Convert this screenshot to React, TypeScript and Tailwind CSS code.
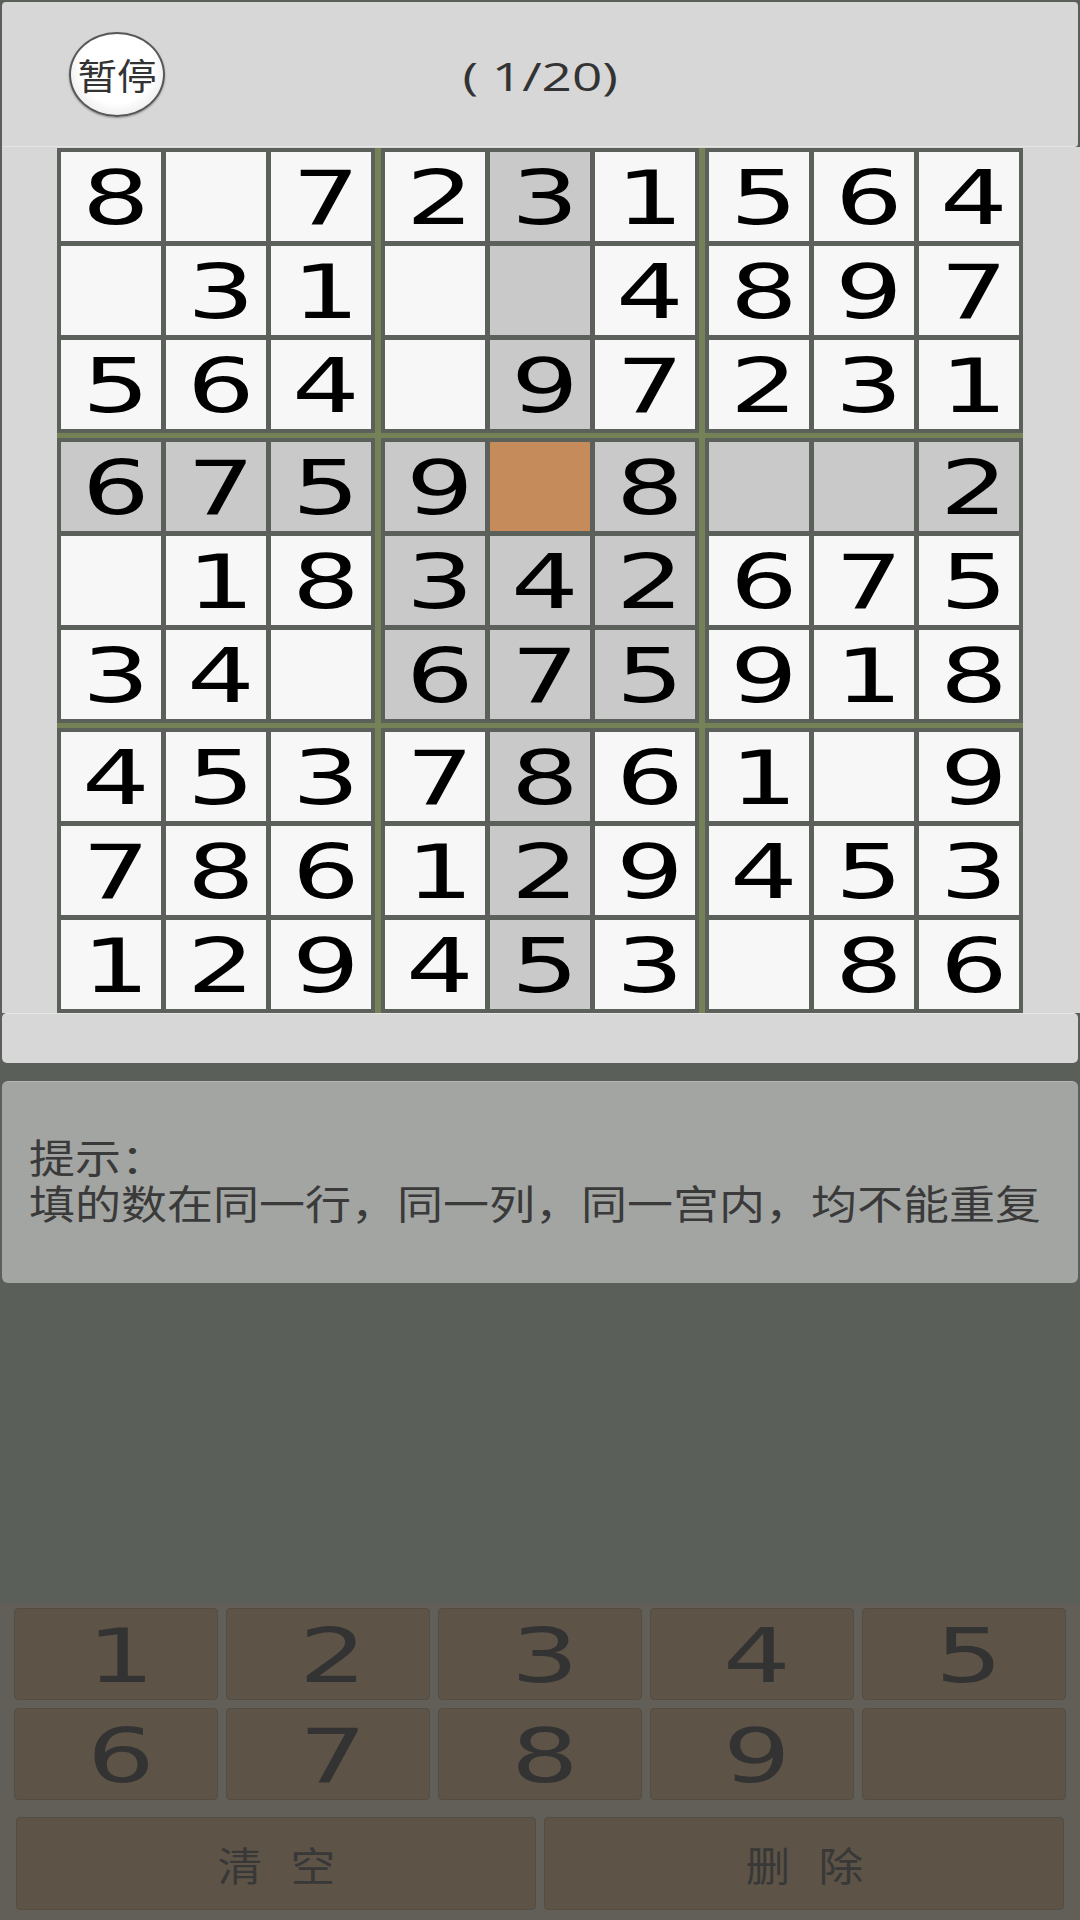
import React from "react";

const board = [
    "8_7231564",
    "_31__4897",
    "564_97231",
    "6759_8__2",
    "_18342675",
    "34_675918",
    "4537861_9",
    "786129453",
    "129453_86",
];

const selRow = 3;
const selCol = 4;

function cellColor(r: number, c: number) {
    if (r === selRow && c === selCol) return "bg-[#c68b5a]";
    const sameBox = Math.floor(r / 3) === Math.floor(selRow / 3) && Math.floor(c / 3) === Math.floor(selCol / 3);
    if (r === selRow || c === selCol || sameBox) return "bg-[#c9c9c9]";
    return "bg-[#f7f7f7]";
}

function Digit({ value, dark }: { value: string; dark?: boolean }) {
    return (
        <span
            className={`inline-block font-['DejaVu_Sans',sans-serif] text-[75px] leading-none scale-x-[1.42] translate-x-[5px] translate-y-[2px] ${dark ? "text-[#333333]" : "text-black"}`}
        >
            {value}
        </span>
    );
}

function Board() {
    const boxes = [];
    for (let br = 0; br < 3; br++) {
        for (let bc = 0; bc < 3; bc++) {
            const cells = [];
            for (let i = 0; i < 3; i++) {
                for (let j = 0; j < 3; j++) {
                    const r = br * 3 + i;
                    const c = bc * 3 + j;
                    const v = board[r][c];
                    cells.push(
                        <div key={`${r}-${c}`} className={`flex items-center justify-center overflow-hidden ${cellColor(r, c)}`}>
                            {v !== "_" && <Digit value={v} />}
                        </div>
                    );
                }
            }
            boxes.push(
                <div
                    key={`${br}-${bc}`}
                    className="bg-[#5b605b] p-[4px] grid grid-cols-[repeat(3,100px)] grid-rows-[repeat(3,89px)] gap-[5px]"
                >
                    {cells}
                </div>
            );
        }
    }
    return <div className="w-[966px] bg-[#758257] grid grid-cols-3 gap-x-[6px] gap-y-[5px]">{boxes}</div>;
}

const keys = ["1", "2", "3", "4", "5", "6", "7", "8", "9", ""];

export default function App() {
    return (
        <div className="w-[1080px] h-[1920px] bg-[#5a5f5a] flex flex-col overflow-hidden">
            {/* top bar */}
            <div className="mt-[2px] mx-[2px] h-[145px] bg-[#d7d7d7] rounded-t-[4px] rounded-br-[4px] border-b border-[#e4e4e4] grid grid-cols-[1fr_auto_1fr] items-center">
                <div className="pl-[67px]">
                    <div className="w-[96px] h-[85px] rounded-[50%] border-2 border-[#565656] bg-[radial-gradient(circle_at_50%_40%,#ffffff_55%,#dadada_100%)] shadow-[0_1px_2px_rgba(0,0,0,0.35)] flex items-center justify-center">
                        <span className="inline-block font-['Noto_Sans_CJK_SC',sans-serif] text-[36px] leading-none text-[#333333] scale-x-[1.1]">
                            暂停
                        </span>
                    </div>
                </div>
                <span className="inline-block font-['Open_Sans',sans-serif] text-[39px] leading-none text-[#333333] scale-x-[1.36] translate-y-[1px] whitespace-pre">
                    ( 1/20)
                </span>
                <div />
            </div>

            {/* board */}
            <div className="ml-[2px] h-[866px] bg-[#d7d7d7] pl-[55px] pt-[1px]">
                <Board />
            </div>

            <div className="mx-[2px] h-[50px] bg-[#d7d7d7] rounded-[5px] border-t border-[#e6e6e6]" />

            {/* hint */}
            <div className="mt-[18px] mx-[2px] h-[202px] bg-[#a3a5a2] rounded-[6px] border-t border-[#b2b4b1] flex flex-col justify-center pl-[27px]">
                <div className="origin-left scale-x-[1.15] font-['Liberation_Sans','Noto_Sans_CJK_SC',sans-serif] text-[40px] leading-[45.5px] text-[#3a3a3a] whitespace-nowrap">
                    <div>提示：</div>
                    <div>填的数在同一行，同一列，同一宫内，均不能重复</div>
                </div>
            </div>

            <div className="flex-1" />

            {/* keypad */}
            <div className="h-[317px] bg-[#625f59] pt-[5px] px-[14px]">
                <div className="grid grid-cols-5 gap-[8px]">
                    {keys.map((k, i) => (
                        <div
                            key={i}
                            className="h-[92px] rounded-[4px] bg-[#5d5447] border border-[#544d43] flex items-center justify-center overflow-hidden"
                        >
                            {k && <Digit value={k} dark />}
                        </div>
                    ))}
                </div>
                <div className="mt-[17px] px-[2px] grid grid-cols-2 gap-[8px]">
                    <div className="h-[93px] rounded-[4px] bg-[#5d5447] border border-[#544d43] flex items-center justify-center gap-[33px] font-['Noto_Sans_CJK_SC',sans-serif] text-[40px] leading-none text-[#383838]">
                        <span className="inline-block scale-x-[1.12]">清</span>
                        <span className="inline-block scale-x-[1.12]">空</span>
                    </div>
                    <div className="h-[93px] rounded-[4px] bg-[#5d5447] border border-[#544d43] flex items-center justify-center gap-[33px] font-['Noto_Sans_CJK_SC',sans-serif] text-[40px] leading-none text-[#383838]">
                        <span className="inline-block scale-x-[1.12]">删</span>
                        <span className="inline-block scale-x-[1.12]">除</span>
                    </div>
                </div>
            </div>
        </div>
    );
}
